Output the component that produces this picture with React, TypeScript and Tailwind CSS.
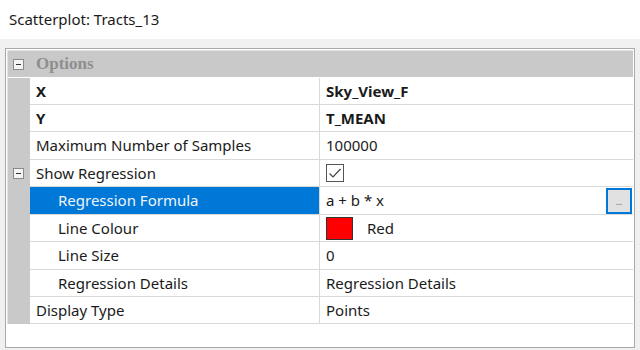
import React from "react";

type Row = {
  name: string;
  value: React.ReactNode;
  h: string;
  indent?: boolean;
  bold?: boolean;
  toggle?: boolean;
  selected?: boolean;
};

function MinusBox() {
  return (
    <span className="flex h-[11px] w-[11px] items-center justify-center border border-[#8a8a8a] bg-[#f4f4f4]">
      <span className="h-px w-[5px] bg-[#333]" />
    </span>
  );
}

function CheckBox() {
  return (
    <span className="flex h-[18px] w-[18px] items-center justify-center border border-[#555] bg-white">
      <svg width="14" height="14" viewBox="0 0 14 14">
        <path d="M1.5 7.5 L5 11 L12.5 3" fill="none" stroke="#444" strokeWidth="1.2" />
      </svg>
    </span>
  );
}

const rows: Row[] = [
  { name: "X", value: "Sky_View_F", h: "h-[27px]", bold: true },
  { name: "Y", value: "T_MEAN", h: "h-[27px]", bold: true },
  { name: "Maximum Number of Samples", value: "100000", h: "h-[28px]" },
  { name: "Show Regression", value: <CheckBox />, h: "h-[27px]", toggle: true },
  { name: "Regression Formula", value: "a + b * x", h: "h-[28px]", indent: true, selected: true },
  {
    name: "Line Colour",
    value: (
      <span className="flex items-center gap-[14px]">
        <span className="h-[23px] w-[27px] border border-[#333] bg-[#ff0000]" />
        Red
      </span>
    ),
    h: "h-[27px]",
    indent: true,
  },
  { name: "Line Size", value: "0", h: "h-[28px]", indent: true },
  { name: "Regression Details", value: "Regression Details", h: "h-[27px]", indent: true },
  { name: "Display Type", value: "Points", h: "h-[27px]" },
];

export default function App() {
  return (
    <div className="h-[350px] w-[640px] bg-[#f0f0f0] font-['Noto_Sans',sans-serif] text-[15px] text-[#1a1a1a]">
      <div className="flex h-[39px] items-center bg-white pl-[9px] text-[15px]">Scatterplot: Tracts_13</div>
      <div className="pt-[9px] pl-[5px] pr-[5px]">
        <div className="h-[300px] border border-[#a9a9a9] bg-white p-px">
          <div className="border-l border-t border-[#e2e2e2]">
            <div className="flex h-[27px] items-center border-b border-white bg-[#c9c9c9] pl-[5px]">
              <MinusBox />
              <span className="ml-[12px] font-['Liberation_Serif',serif] text-[17px] font-bold text-[#8e8e8e]">Options</span>
            </div>
            <div className="flex">
              <div className="flex w-[22px] flex-col bg-[#c9c9c9]">
                {rows.map((r) => (
                  <div key={r.name} className={`${r.h} flex items-center pl-[5px]`}>
                    {r.toggle && <MinusBox />}
                  </div>
                ))}
              </div>
              <div className="flex flex-1 flex-col">
                {rows.map((r) => (
                  <div key={r.name} className={`${r.h} flex border-b border-[#d8d8d8]`}>
                    <div
                      className={`flex w-[290px] items-center border-r border-[#d8d8d8] ${r.indent ? "pl-[28px]" : "pl-[6px]"} ${r.selected ? "bg-[#0078d7] text-[#f0f4fa]" : ""} ${r.bold ? "font-bold" : ""}`}
                    >
                      {r.name}
                    </div>
                    <div className={`flex flex-1 items-center pl-[6px] ${r.bold ? "font-bold" : ""}`}>
                      <span className="flex-1">{r.value}</span>
                      {r.selected && (
                        <span className="mr-px flex h-[26px] w-[26px] items-end justify-center border-2 border-[#0078d7] bg-[#e1e1e1] pb-[6px] text-[8px] leading-none text-[#555]">
                          ...
                        </span>
                      )}
                    </div>
                  </div>
                ))}
              </div>
            </div>
          </div>
        </div>
      </div>
    </div>
  );
}
